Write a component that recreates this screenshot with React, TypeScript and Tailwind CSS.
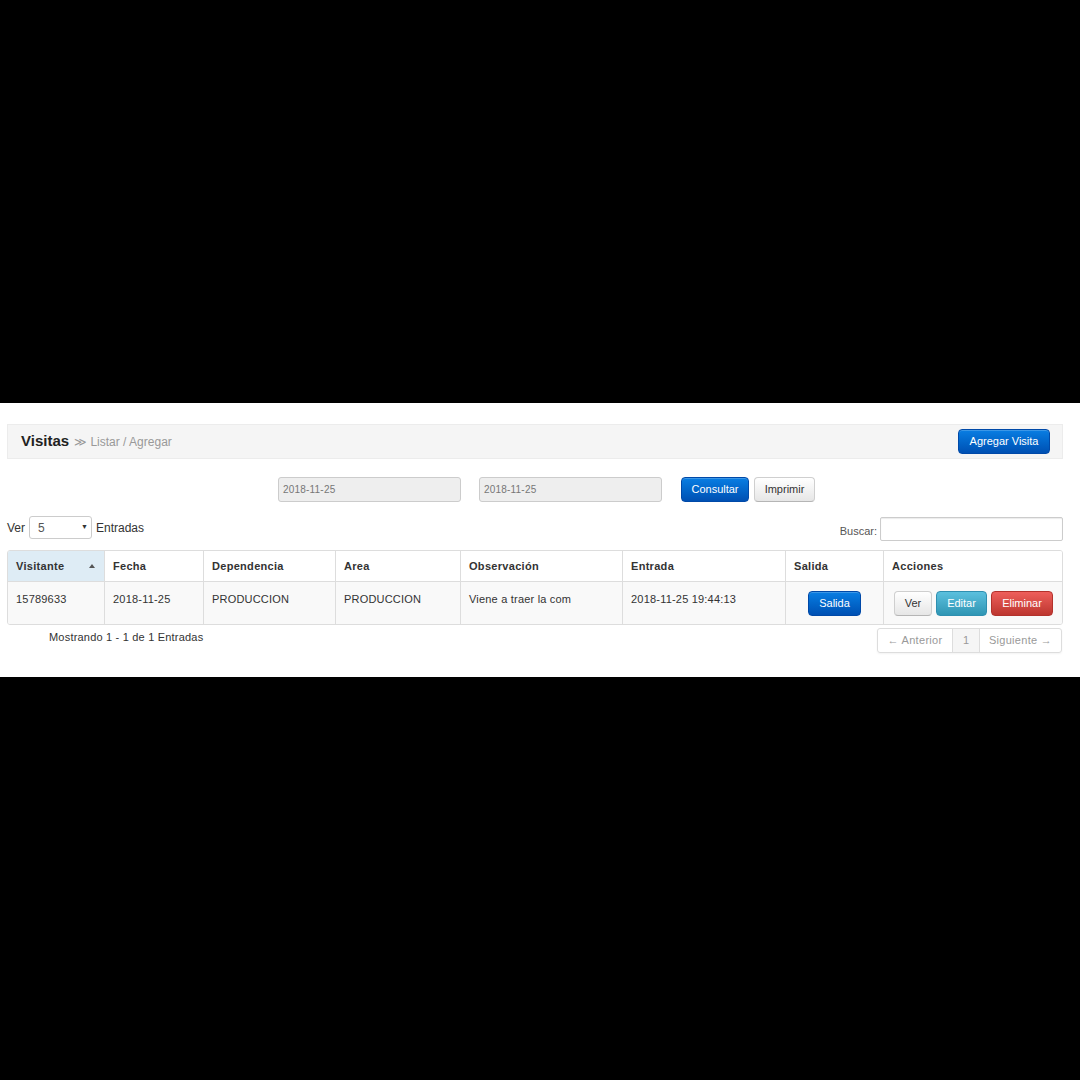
import React from "react";

const font = "font-['Liberation_Sans',Arial,sans-serif]";

const columns = [
  { label: "Visitante", w: "w-[96px]", sorted: true },
  { label: "Fecha", w: "w-[99px]" },
  { label: "Dependencia", w: "w-[132px]" },
  { label: "Area", w: "w-[125px]" },
  { label: "Observación", w: "w-[162px]" },
  { label: "Entrada", w: "w-[163px]" },
  { label: "Salida", w: "w-[98px]" },
  { label: "Acciones", w: "flex-1" },
];

const row = ["15789633", "2018-11-25", "PRODUCCION", "PRODUCCION", "Viene a traer la com", "2018-11-25 19:44:13"];

const btnBase = "h-[25px] rounded-[4px] text-[11px] leading-none flex items-center justify-center border";
const btnPrimary = `${btnBase} border-[#0049a8] bg-gradient-to-b from-[#0a7ee3] to-[#0050b3] text-white shadow-[inset_0_1px_0_rgba(255,255,255,0.2)]`;
const btnDefault = `${btnBase} border-[#cfcfcf] border-b-[#b5b5b5] bg-gradient-to-b from-white to-[#e6e6e6] text-[#333]`;
const btnInfo = `${btnBase} border-[#2f8fb0] bg-gradient-to-b from-[#5bc0de] to-[#2f96b4] text-white`;
const btnDanger = `${btnBase} border-[#b3322c] bg-gradient-to-b from-[#ee5f5b] to-[#bd362f] text-white`;

export default function App() {
  return (
    <div className={`h-screen w-full bg-black flex items-center ${font}`}>
      <div className="w-full h-[274px] bg-white pt-[21px] pl-[7px] pr-[17px] text-[#333]">
        {/* HEADER */}
        <div className="h-[35px] bg-[#f5f5f5] border border-[#ececec] flex items-center justify-between pl-[13px] pr-[12px]">
          <div className="flex items-baseline gap-[5px]">
            <span className="text-[15px] font-bold text-[#222]">Visitas</span>
            <span className="text-[12px] text-[#999]">≫ Listar / Agregar</span>
          </div>
          <button className={`${btnPrimary} w-[92px]`}>Agregar Visita</button>
        </div>

        {/* DATE FILTERS */}
        <div className="mt-[18px] ml-[271px] flex items-center">
          <div className="w-[183px] h-[25px] bg-[#eee] border border-[#ccc] rounded-[3px] flex items-center pl-[4px] text-[10px] tracking-[0.2px] text-[#777]">2018-11-25</div>
          <div className="ml-[18px] w-[183px] h-[25px] bg-[#eee] border border-[#ccc] rounded-[3px] flex items-center pl-[4px] text-[10px] tracking-[0.2px] text-[#777]">2018-11-25</div>
          <button className={`${btnPrimary} ml-[19px] w-[68px]`}>Consultar</button>
          <button className={`${btnDefault} ml-[5px] w-[61px]`}>Imprimir</button>
        </div>

        {/* LENGTH / SEARCH */}
        <div className="mt-[14px] flex items-start justify-between">
          <div className="flex items-center text-[12px] text-[#333]">
            <span>Ver</span>
            <div className="ml-[4px] w-[63px] h-[23px] border border-[#ccc] rounded-[3px] bg-white flex items-center justify-between pl-[8px] pr-[3px]">
              <span className="text-[12px] text-[#555]">5</span>
              <span className="text-[7px] text-[#333]">▼</span>
            </div>
            <span className="ml-[4px]">Entradas</span>
          </div>
          <div className="mt-[1px] flex items-center text-[11px] text-[#555]">
            <span className="mt-[5px]">Buscar:</span>
            <div className="ml-[3px] w-[183px] h-[24px] border border-[#ccc] rounded-[2px] bg-white shadow-[inset_0_1px_1px_rgba(0,0,0,0.08)]"></div>
          </div>
        </div>

        {/* TABLE */}
        <div className="mt-[9px] border border-[#ddd] rounded-[3px] overflow-hidden">
          <div className="flex h-[30px]">
            {columns.map((c, i) => (
              <div
                key={c.label}
                className={`${c.w} ${i > 0 ? "border-l border-[#ddd]" : ""} ${c.sorted ? "bg-[#deecf5]" : "bg-white"} flex items-center justify-between pl-[8px] pr-[8px] text-[11px] font-bold tracking-[0.3px] text-[#333]`}
              >
                <span>{c.label}</span>
                {c.sorted && <span className="w-0 h-0 border-l-[3px] border-r-[3px] border-b-[4px] border-l-transparent border-r-transparent border-b-[#555] mr-[1px]"></span>}
              </div>
            ))}
          </div>
          <div className="flex h-[43px] border-t border-[#ddd] bg-[#f9f9f9]">
            {row.map((v, i) => (
              <div key={i} className={`${columns[i].w} ${i > 0 ? "border-l border-[#ddd]" : ""} pl-[8px] pt-[9px] text-[11px] tracking-[0.2px] text-[#333]`}>
                {v}
              </div>
            ))}
            <div className={`${columns[6].w} border-l border-[#ddd] flex items-start justify-center pt-[9px]`}>
              <button className={`${btnPrimary} w-[53px]`}>Salida</button>
            </div>
            <div className={`${columns[7].w} border-l border-[#ddd] flex items-start pt-[9px] pl-[10px] gap-[4px]`}>
              <button className={`${btnDefault} w-[38px]`}>Ver</button>
              <button className={`${btnInfo} w-[51px]`}>Editar</button>
              <button className={`${btnDanger} w-[62px]`}>Eliminar</button>
            </div>
          </div>
        </div>

        {/* FOOTER */}
        <div className="mt-[3px] flex items-start justify-between">
          <span className="ml-[42px] mt-[1px] text-[11px] tracking-[0.2px] text-[#333]">Mostrando 1 - 1 de 1 Entradas</span>
          <div className="mr-[1px] h-[25px] flex border border-[#ddd] rounded-[3px] text-[11px] text-[#999] shadow-[0_1px_2px_rgba(0,0,0,0.05)]">
            <div className="w-[74px] flex items-center justify-center tracking-[0.3px]">← Anterior</div>
            <div className="w-[27px] flex items-center justify-center border-l border-[#ddd] bg-[#f5f5f5]">1</div>
            <div className="w-[82px] flex items-center justify-center border-l border-[#ddd] tracking-[0.3px]">Siguiente →</div>
          </div>
        </div>
      </div>
    </div>
  );
}
